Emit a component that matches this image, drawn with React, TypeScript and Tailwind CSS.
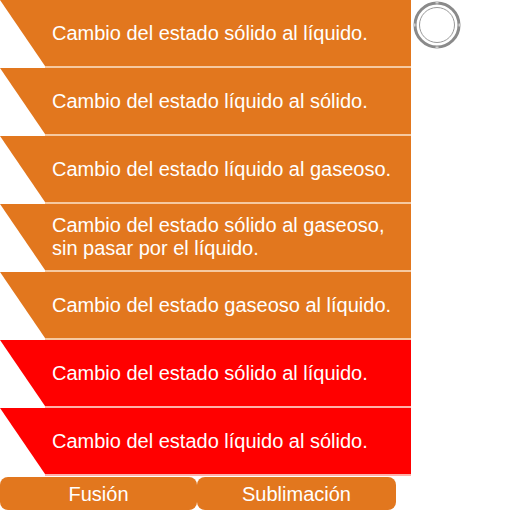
import React from "react";

const rows: { text: React.ReactNode; red?: boolean }[] = [
  { text: "Cambio del estado sólido al líquido." },
  { text: "Cambio del estado líquido al sólido." },
  { text: "Cambio del estado líquido al gaseoso." },
  {
    text: (
      <>
        Cambio del estado sólido al gaseoso,
        <br />
        sin pasar por el líquido.
      </>
    ),
  },
  { text: "Cambio del estado gaseoso al líquido." },
  { text: "Cambio del estado sólido al líquido.", red: true },
  { text: "Cambio del estado líquido al sólido.", red: true },
];

export default function App() {
  return (
    <div
      className="relative w-[512px] h-[512px] bg-white overflow-hidden"
      style={{ fontFamily: '"Liberation Sans", Arial, sans-serif' }}
    >
      <div className="flex flex-col w-[411px]">
        {rows.map((r, i) => (
          <div key={i} className="h-[68px] flex flex-col">
            <div
              className={`h-[66px] flex items-center pl-[52px] text-white text-[20px] leading-[23px] ${
                r.red ? "bg-[#ff0000]" : "bg-[#e2771e]"
              }`}
              style={{ clipPath: "polygon(0 0, 100% 0, 100% 100%, 45px 100%)" }}
            >
              <div>{r.text}</div>
            </div>
            <div className="h-[2px] flex">
              <div className="w-[45px]" />
              <div className={`flex-1 ${r.red ? "bg-[#ffb0a8]" : "bg-[#f6c9a0]"}`} />
            </div>
          </div>
        ))}
        <div className="flex mt-[1px] h-[33px]">
          <div className="w-[197px] h-[33px] bg-[#e2771e] rounded-[8px] flex items-center justify-center text-white text-[20px]">
            Fusión
          </div>
          <div className="w-[199px] h-[33px] bg-[#e2771e] rounded-[8px] flex items-center justify-center text-white text-[20px]">
            Sublimación
          </div>
        </div>
      </div>
      <div className="absolute left-[413px] top-[1px]">
        <svg width="48" height="48" viewBox="0 0 48 48">
          <circle cx="24" cy="24" r="22" fill="white" stroke="#8a8a8a" strokeWidth="3" />
          <circle cx="24" cy="24" r="17.5" fill="none" stroke="#9a9a9a" strokeWidth="1" />
          <rect x="22.5" y="0.5" width="3" height="2" fill="#d0d0d0" />
          <rect x="22.5" y="45.5" width="3" height="2" fill="#d0d0d0" />
          <rect x="0.5" y="22.5" width="2" height="3" fill="#d0d0d0" />
          <rect x="45.5" y="22.5" width="2" height="3" fill="#d0d0d0" />
        </svg>
      </div>
    </div>
  );
}
